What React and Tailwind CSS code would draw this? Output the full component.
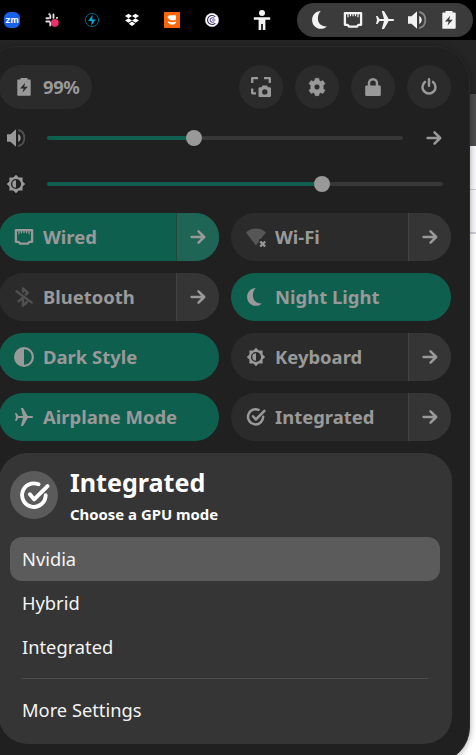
import React from 'react';

function Icon({ size = 20, className = '', children }) {
  return (
    <svg viewBox="0 0 20 20" width={size} height={size} fill="none" stroke="none" className={'block shrink-0 ' + className}>
      {children}
    </svg>
  );
}

const Moon = (p) => (
  <Icon {...p}>
    <path fill="currentColor" d="M9.800 1.100C4.800 1.300 1.100 5.100 1.100 9.900c0 4.900 3.900 8.900 8.800 8.900 2.400 0 4.400-.9 6-2.300C10.300 16.800 6.900 13.300 6.900 8.600c0-3.200 1-5.900 2.900-7.500z" />
  </Icon>
);
const Wired = (p) => (
  <Icon {...p}>
    <path stroke="currentColor" strokeWidth="2.300" strokeLinejoin="round" d="M1.900 3.100h16.200v11.700h-2.600l-1.700 1.900H6.200l-1.700-1.900H1.900z" />
    <path stroke="currentColor" strokeWidth="1.200" d="M5 3v4.200M7.500 3v3.300M10 3v3.300M12.500 3v3.300M15 3v4.200" />
  </Icon>
);
const Plane = (p) => (
  <Icon {...p}>
    <path fill="currentColor" d="M1 6h1.500l2 2.900H9L6.800 1H9l4.700 7.900h3.500c1.100 0 2 .5 2 1.100s-.9 1.100-2 1.100h-3.500L9 19H6.800L9 11.100H4.500L2.500 14H1l1-4z" />
  </Icon>
);
const Volume = (p) => (
  <Icon {...p}>
    <path fill="currentColor" d="M1 6.300h3.500L10 1.300v17.400l-5.500-5H1zM12.200 6c1.600.8 2.500 2.200 2.500 4s-.9 3.200-2.500 4z" />
    <path stroke="currentColor" strokeOpacity=".4" strokeWidth="1.800" d="M12.300 2c3.600.8 6 4 6 8s-2.400 7.200-6 8" />
  </Icon>
);
const Battery = (p) => (
  <Icon {...p}>
    <path fill="currentColor" fillRule="evenodd" d="M6.500 1h7v1.500h2.200c.6 0 1 .4 1 1v14.200c0 .7-.4 1.100-1 1.100H4.300c-.6 0-1-.4-1-1.100V3.500c0-.6.4-1 1-1h2.200zM11.200 5.800L6 11.600h3.600l-1 3.800 5.200-5.700h-3.600z" />
  </Icon>
);
const Brightness = (p) => (
  <Icon {...p}>
    <path fill="currentColor" fillRule="evenodd" d="M10 .8l2.700 2.700h3.900v3.900L19.200 10l-2.600 2.600v3.900h-3.900L10 19.200l-2.700-2.700H3.400v-3.900L.8 10l2.600-2.600V3.500h3.900zM10 4.900a5.100 5.100 0 100 10.200 5.100 5.100 0 000-10.200z" />
    <path fill="currentColor" d="M10 6.300a3.700 3.700 0 000 7.400z" />
  </Icon>
);
const Arrow = (p) => (
  <Icon {...p}>
    <path stroke="currentColor" strokeWidth="2.500" strokeLinecap="round" strokeLinejoin="round" d="M3.600 10h12M10.500 4.300l5.700 5.700-5.700 5.700" />
  </Icon>
);
const Check = (p) => (
  <Icon {...p}>
    <path stroke="currentColor" strokeWidth="2.500" strokeLinecap="round" d="M12.600 2.800A7.600 7.600 0 1017.200 9.800" />
    <path stroke="currentColor" strokeWidth="2.500" strokeLinecap="round" strokeLinejoin="round" d="M7 9.200l2.800 3.300 8.600-8.600" />
  </Icon>
);
const DarkStyle = (p) => (
  <Icon {...p}>
    <circle cx="10" cy="10" r="8.900" stroke="currentColor" strokeWidth="2.200" />
    <path fill="currentColor" d="M10 1a9 9 0 000 18z" />
  </Icon>
);
const Bluetooth = (p) => (
  <Icon {...p}>
    <path stroke="currentColor" strokeWidth="2.400" strokeLinecap="round" strokeLinejoin="round" d="M2.500 4.300L17.800 15.600M9 4.500V1.500l4.800 4.200-2 1.800M4.500 14.300L9 10.800v7.700l4-3.500" />
  </Icon>
);
const Wifi = (p) => (
  <Icon {...p}>
    <path fill="currentColor" opacity=".4" d="M0 5.500C2.600 2.800 6 1.500 10 1.500s7.400 1.300 10 4l-5.500 6.700H13v2.300L10 18.500z" />
    <path stroke="currentColor" strokeWidth="2.300" d="M14.200 14.500l5 5M19.200 14.500l-5 5" />
  </Icon>
);
const Screenshot = (p) => (
  <Icon {...p}>
    <path stroke="currentColor" strokeWidth="2.300" d="M1.200 6V1.200H7M13 1.200h5.800V6M1.200 11.500v4.800H5" strokeLinejoin="round" />
    <path fill="currentColor" fillRule="evenodd" d="M11.500 8.600h4.500l1 1.600h1.500c1 0 1.500.5 1.500 1.500v6.800c0 1-.5 1.500-1.500 1.500h-9.500c-1 0-1.500-.5-1.500-1.500v-6.800c0-1 .5-1.500 1.500-1.500h1.500zM13.800 12.200a2.700 2.700 0 100 5.400 2.700 2.700 0 000-5.400z" />
  </Icon>
);
const Gear = (p) => (
  <Icon {...p}>
    <path fill="currentColor" fillRule="evenodd" strokeLinejoin="round" stroke="currentColor" strokeWidth=".8" d="M8.300 1.400h3.400l.5 2.300 1.500.8 2.300-.8 1.800 3-1.700 1.700v3.200l1.700 1.700-1.800 3-2.300-.8-1.500.8-.5 2.300H8.300l-.5-2.300-1.500-.8-2.300.8-1.800-3 1.700-1.700V8.400L2.200 6.700l1.800-3 2.300.8 1.500-.8zM10 7a3 3 0 100 6 3 3 0 000-6z" />
  </Icon>
);
const Lock = (p) => (
  <Icon {...p}>
    <rect x="2.200" y="8.500" width="15.600" height="10.500" rx="1.200" fill="currentColor" />
    <path stroke="currentColor" strokeWidth="2.400" d="M6 9V6.300a4 4 0 018 0V9" />
  </Icon>
);
const Power = (p) => (
  <Icon {...p}>
    <path stroke="currentColor" strokeWidth="2.500" strokeLinecap="round" d="M10 2.200v6.600M6 4.900a6.500 6.500 0 108 0" />
  </Icon>
);
const Person = (p) => (
  <Icon {...p}>
    <circle cx="10" cy="3" r="3" fill="currentColor" />
    <path fill="currentColor" d="M1.800 7.200h16.400v2.600h-4.800V20h-2.600v-6H9.200v6H6.600V9.800H1.800z" />
  </Icon>
);

function Zoom() {
  return <span className="flex size-4 items-center justify-center rounded-[6px] bg-[#1761ea] pb-0.5 font-['Inter'] text-[9px] font-bold leading-none text-white">zm</span>;
}
function Slack() {
  return (
    <svg viewBox="0 0 16 16" width="16" height="16" className="block">
      <path stroke="#ddd" strokeWidth="1.900" strokeLinecap="round" d="M6.300 3.800V6M2.500 6.200h2M9.500 2.500v3.400M12.800 5.900h.3M2.300 9.500h3.300M6.300 10.800v2.600M5.300 2.300h.4" />
      <circle cx="10.800" cy="10.800" r="3.900" fill="#f02e6e" />
    </svg>
  );
}
function Bolt() {
  return (
    <svg viewBox="0 0 16 16" width="16" height="16" className="block">
      <circle cx="8" cy="8" r="6.600" fill="none" stroke="#08667f" />
      <path fill="#08a9dc" d="M8.600 2.800L4.200 8.900h3.500l-.5 4.500 4.500-6H8.300z" />
    </svg>
  );
}
function Dropbox() {
  return (
    <svg viewBox="0 0 16 16" width="16" height="16" className="block">
      <path fill="#fff" d="M4.500 1.800L8 4 4.500 6.300 1 4zM11.500 1.800L15 4l-3.500 2.300L8 4zM4.500 6.300L8 8.600l-3.500 2.200L1 8.600zM11.500 6.300L15 8.600l-3.500 2.200L8 8.600zM8 9.600l3.300 2.200L8 14l-3.300-2.200z" />
    </svg>
  );
}
function Mug() {
  return (
    <svg viewBox="0 0 16 16" width="16" height="16" className="block">
      <rect width="16" height="16" rx="1" fill="#ff6508" />
      <path fill="#fff" d="M4.800 3.300h6.400c.5 0 .8.400.8.900v2.200c0 1.200-.8 1.900-2 1.900H7C6 8.300 5.300 7.700 5 6.800l-1.300-.6V4.400l1.100-.3zM3.700 9.200c2.700 1.500 5.900 1.500 8.600 0-.3 2.200-1.800 3.500-4.300 3.500s-4-1.300-4.300-3.500z" />
    </svg>
  );
}
function Clockify() {
  return (
    <svg viewBox="0 0 16 16" width="16" height="16" className="block" fill="none">
      <circle cx="8" cy="8" r="6.700" fill="#fff" stroke="#d5ccf1" strokeWidth=".5" />
      <path stroke="#31265c" strokeWidth="1.100" d="M11.300 4.900a4.500 4.500 0 100 6.200" />
      <path stroke="#5d4a9c" strokeWidth="1.100" d="M10.200 6.500a2.300 2.300 0 100 3M8 8h3.500" />
    </svg>
  );
}

function TopBar() {
  return (
    <header className="flex h-10 items-center bg-black text-[#f2f2f2]">
      <div className="ml-1 flex items-center gap-6">
        <Zoom /><Slack /><Bolt /><Dropbox /><Mug /><Clockify />
      </div>
      <Person className="ml-8" />
      <div className="ml-[25px] flex h-[34px] w-44 items-center justify-center gap-3 rounded-full bg-[#3b3b3b]">
        <Moon /><Wired /><Plane /><Volume /><Battery />
      </div>
    </header>
  );
}

function Slider({ value }) {
  return (
    <div className="flex h-4 flex-1 items-center">
      <div className="h-1 rounded-l-full bg-[#0f5f4f]" style={{ width: value + '%' }} />
      <div className="z-10 -mx-2 size-4 shrink-0 rounded-full bg-[#999]" />
      <div className="h-1 flex-1 rounded-r-full bg-[#373737]" />
    </div>
  );
}

function Tile({ icon: Glyph, label, active, menu, dim }) {
  return (
    <div className={'flex h-12 overflow-hidden rounded-full ' + (active ? 'bg-[#0f5f4f]' : 'bg-[#2b2b2b]')}>
      <div className="flex flex-1 items-center gap-[9px] pl-[15px]">
        <Glyph className={dim ? 'text-[#505050]' : ''} />
        <span className="whitespace-nowrap text-[18.45px] font-bold leading-6">{label}</span>
      </div>
      {menu && (
        <div className={'flex w-[43px] items-center justify-center border-l ' + (active ? 'border-[#26483b] bg-[#1e6555]' : 'border-[#424242] bg-[#353535]')}>
          <Arrow />
        </div>
      )}
    </div>
  );
}

export default function App() {
  const buttons = [Screenshot, Gear, Lock, Power];
  return (
    <div className="h-[755px] w-[476px] overflow-hidden bg-white font-['Noto_Sans',sans-serif]">
      <TopBar />
      <div className="h-[715px] bg-[linear-gradient(to_bottom,#252525_0_54px,#4d4d4d_54px_106px,#f8f8fc_106px_149px,#c9cddb_149px_150px,#f8f8fc_150px_192px,#cccdd6_192px_194px,#fff_194px)] pt-1.5">
        <main className="ml-[-20px] h-[717px] w-[490px] rounded-[36px] border border-[#292929] bg-[#202020] px-[18px] pt-[18px] text-[#999] shadow-[0_1px_6px_rgba(0,0,0,0.35)]">
          <div className="flex h-11 items-center">
            <div className="mr-auto flex h-11 w-[93px] items-center gap-[9px] rounded-full bg-[#2b2b2b] pl-[15px]">
              <Battery />
              <span className="text-[18.3px] font-bold leading-6 tracking-[-0.3px]">99%</span>
            </div>
            <div className="flex gap-3">
              {buttons.map((Glyph, i) => (
                <div key={i} className="flex size-11 items-center justify-center rounded-full bg-[#2b2b2b]"><Glyph /></div>
              ))}
            </div>
          </div>
          <div className="mt-[7px] flex h-11 items-center pl-[7px]">
            <Volume className="mr-[21px]" />
            <Slider value={41.3} />
            <Arrow className="ml-[21px] mr-[7px]" />
          </div>
          <div className="mt-0.5 flex h-11 items-center pl-[7px] pr-2">
            <Brightness className="mr-[21px]" />
            <Slider value={69.4} />
          </div>
          <div className="mt-[7px] grid grid-cols-2 gap-3">
            <Tile icon={Wired} label="Wired" active menu />
            <Tile icon={Wifi} label="Wi-Fi" menu />
            <Tile icon={Bluetooth} label="Bluetooth" menu dim />
            <Tile icon={Moon} label="Night Light" active />
            <Tile icon={DarkStyle} label="Dark Style" active />
            <Tile icon={Brightness} label="Keyboard" menu />
            <Tile icon={Plane} label="Airplane Mode" active />
            <Tile icon={Check} label="Integrated" menu />
          </div>
          <section className="-mr-px mt-3 h-[291px] rounded-[28px] bg-[#353535] pl-[11px] pr-3 pt-[15px] text-white">
            <div className="flex h-[54px] items-center gap-3">
              <div className="flex size-12 items-center justify-center rounded-full bg-[#5b5b5b] pl-px"><Check size={31} /></div>
              <div className="pt-0.5">
                <h1 className="-mt-0.5 text-[25.1px] font-bold leading-[33px]">Integrated</h1>
                <p className="mt-[5px] text-[14.9px] font-bold leading-5">Choose a GPU mode</p>
              </div>
            </div>
            <ul className="mt-[15px] text-[18.3px] leading-6 text-[#f4f4f4]">
              <li className="flex h-11 items-center rounded-xl bg-[#5b5b5b] px-3">Nvidia</li>
              <li className="flex h-11 items-center px-3">Hybrid</li>
              <li className="flex h-11 items-center px-3">Integrated</li>
              <li className="mx-3 mt-[9px] h-px bg-[#4c4c4c]" />
              <li className="mt-[9px] flex h-11 items-center px-3">More Settings</li>
            </ul>
          </section>
        </main>
      </div>
    </div>
  );
}
